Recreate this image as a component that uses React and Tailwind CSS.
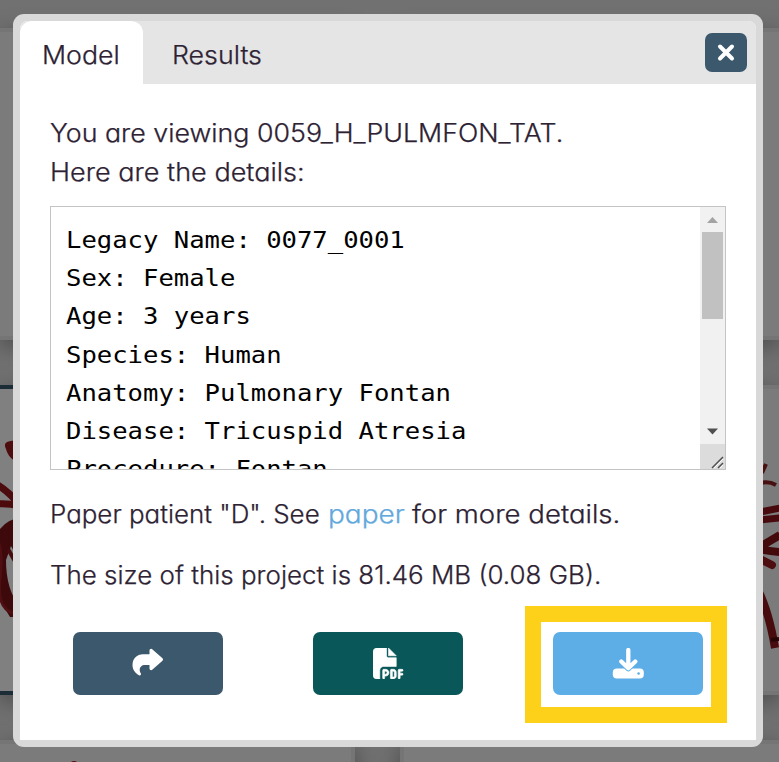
import { FaFilePdf } from "react-icons/fa6";

const details = [
  "Legacy Name: 0077_0001",
  "Sex: Female",
  "Age: 3 years",
  "Species: Human",
  "Anatomy: Pulmonary Fontan",
  "Disease: Tricuspid Atresia",
  "Procedure: Fontan",
];

function Backdrop() {
  return (
    <div className="absolute inset-0 grid grid-cols-[355px_1fr] grid-rows-[312px_310px_100px] gap-x-[45px] gap-y-[45px] overflow-hidden bg-[#717171] pt-7">
      <div className="border-4 border-l-0 border-[#757575] bg-[#7b7b7b] shadow-[0_6px_22px_rgba(0,0,0,0.35)]" />
      <div className="border-4 border-r-0 border-[#757575] bg-[#7b7b7b] shadow-[0_6px_22px_rgba(0,0,0,0.35)]" />
      <div className="border-y-4 border-[#1d2d38] bg-[#808080] shadow-[0_6px_22px_rgba(0,0,0,0.35)]">
        <svg className="h-[302px] w-10" viewBox="0 389 40 302" fill="none">
          <path d="M20 441C10 440 2 441 6 449C8 456 11 459 20 464Z" fill="#4d0c0e" />
          <path d="M-4 484Q7 490 20 505M-4 504Q8 503 20 506" stroke="#4c0b0d" strokeWidth="7" />
          <path d="M-4 535Q5 519 20 518V562L11 546L6 560Q6 590 20 607V617H10L-4 594Z" fill="#3d090b" />
          <path d="M-2 541Q3 552 0 580T13 613" stroke="#4f0e11" strokeWidth="3" />
          <path d="M8 549L20 570" stroke="#450b0d" strokeWidth="4" />
        </svg>
      </div>
      <div className="flex justify-end border-4 border-r-0 border-[#757575] bg-[#7b7b7b] shadow-[0_6px_22px_rgba(0,0,0,0.35)]">
        <svg className="h-[302px] w-10" viewBox="739 389 40 302" fill="none">
          <path d="M762 473L766 464M760 483Q769 481 776 485" stroke="#491012" strokeWidth="4" />
          <path d="M760 512L780 508M760 520L780 518" stroke="#480a0c" strokeWidth="7" />
          <path d="M758 548L780 535M758 549Q768 551 780 552" stroke="#430a0c" strokeWidth="8" />
          <path d="M760 559L772 565" stroke="#4e0d0f" strokeWidth="8" strokeLinecap="round" />
          <path d="M758 590Q769 612 775 648" stroke="#480c0e" strokeWidth="8" />
          <path d="M771 640L779 639" stroke="#250607" strokeWidth="4" />
        </svg>
      </div>
      <div className="border-4 border-l-0 border-[#757575] bg-[#7b7b7b] shadow-[0_6px_22px_rgba(0,0,0,0.35)]">
        <svg className="ml-[68px] mt-[16px] h-3 w-3" viewBox="0 0 12 12">
          <circle cx="6" cy="6" r="5" fill="#4d0c0e" />
        </svg>
      </div>
      <div className="border-4 border-r-0 border-[#757575] bg-[#7b7b7b] shadow-[0_6px_22px_rgba(0,0,0,0.35)]" />
    </div>
  );
}

function CloseIcon() {
  return (
    <svg className="h-5 w-5" viewBox="0 0 20 20" fill="none" stroke="white" strokeWidth="4" strokeLinecap="round">
      <path d="M4 3.500L16 15.500M16 3.500L4 15.500" />
    </svg>
  );
}

function ShareIcon() {
  return (
    <svg className="h-8 w-8" viewBox="0 0 32 32">
      <path
        d="M17.500 2.700C17.500 1 19.300.3 20.500 1.400L30.500 10.300Q31.700 11.500 30.500 12.700L20.500 21.600C19.300 22.700 17.500 22 17.500 20.400V17H13C9.700 17 7.700 19.100 7.700 21.800C7.700 23.500 8.400 24.600 8.800 25.300C9.500 26.600 8.400 28 7 27.300C3.600 25.400.5 22 .5 17C.5 10.700 5 6.300 11 6.300H17.500Z"
        fill="white"
      />
    </svg>
  );
}

function DownloadIcon() {
  return (
    <svg className="h-8 w-8" viewBox="0 0 32 32" fill="none" strokeLinecap="round" strokeLinejoin="round">
      <rect x="0.8" y="20.500" width="31" height="10" rx="4" fill="white" />
      <circle cx="26.600" cy="25.500" r="1.300" fill="#5dade7" />
      <path d="M9.300 13.500L16.300 20.500L23.300 13.500" stroke="#5dade7" strokeWidth="5.800" />
      <path d="M16.300 2V19.500M9.300 13.500L16.300 20.300L23.300 13.500" stroke="white" strokeWidth="4.300" />
    </svg>
  );
}

function Scrollbar() {
  return (
    <div className="flex w-[25px] flex-col items-center bg-[#f1f1f1]">
      <svg className="h-[25px] w-[25px]" viewBox="0 0 25 25">
        <path d="M7 16L12.500 10L18 16Z" fill="#a3a3a3" />
      </svg>
      <div className="mr-px h-[87px] w-[21px] bg-[#c1c1c1]" />
      <div className="flex-1" />
      <svg className="h-[25px] w-[25px]" viewBox="0 0 25 25">
        <path d="M7 9.500H18L12.500 15.500Z" fill="#505050" />
      </svg>
      <svg className="h-[25px] w-[25px] bg-[#dcdcdc]" viewBox="0 0 25 25" fill="none">
        <path d="M12 24L23 13M18 24L23 19" stroke="#505050" strokeWidth="1.500" />
        <path d="M14 24L23 15M20 24L23 21" stroke="white" strokeWidth="1" />
      </svg>
    </div>
  );
}

export default function App() {
  return (
    <div className="relative h-[762px] w-[779px] overflow-hidden font-['Inter',sans-serif] text-[25px] font-light text-[#2d2233] [-webkit-text-stroke:0.25px] [font-feature-settings:'cv11']">
      <Backdrop />
      <main className="relative ml-[13px] mt-[14px] h-[733px] w-[750px] rounded-[11px] bg-[#d9d9d9] p-[7px]">
        <div className="flex h-[719px] flex-col overflow-hidden rounded-t-[8px] bg-white">
          <header className="flex h-[63px] shrink-0 bg-[#e5e5e5] leading-[69px]">
            <div className="w-[123px] rounded-t-[12px] bg-white pl-[22px]">
              <span className="inline-block origin-left scale-x-[1.07] whitespace-nowrap">Model</span>
            </div>
            <div className="flex-1 pl-[29px]">
              <span className="inline-block origin-left scale-x-[1.07] whitespace-nowrap">Results</span>
            </div>
            <button className="mr-[9px] mt-3 flex h-[39px] w-[42px] items-center justify-center rounded-[7px] bg-[#3b586d]">
              <CloseIcon />
            </button>
          </header>
          <section className="flex flex-col px-[30px] pt-[30px]">
            <p className="h-[39px] origin-left scale-x-[1.071] whitespace-nowrap leading-[39px]">You are viewing 0059_H_PULMFON_TAT.</p>
            <p className="h-[39px] origin-left scale-x-[1.082] whitespace-nowrap leading-[39px]">Here are the details:</p>
            <div className="mt-[14px] flex h-[264px] w-[676px] border border-[#c4c4c4]">
              <div className="flex-1 overflow-hidden pl-[15px] pt-[14px]">
                <div className="w-[560px] origin-left scale-x-[1.112] whitespace-pre font-['DejaVu_Sans_Mono',monospace] text-[23px] font-normal leading-[38.2px] text-black [-webkit-text-stroke:0px]">
                  {details.map((line) => (
                    <div key={line}>{line}</div>
                  ))}
                </div>
              </div>
              <Scrollbar />
            </div>
            <p className="mt-[25px] flex h-[39px] whitespace-nowrap leading-[39px]">
              <span className="w-[278px] origin-left scale-x-[1.037]">Paper patient "D". See</span>
              <span className="w-[84px] origin-left scale-x-[1.12] text-[#62a8dc]">paper</span>
              <span className="origin-left scale-x-[1.102]">for more details.</span>
            </p>
            <p className="mt-[22px] h-[39px] origin-left scale-x-[1.038] whitespace-nowrap leading-[39px]">The size of this project is 81.46 MB (0.08 GB).</p>
          </section>
          <footer className="mt-[11px] flex h-[117px] items-start pl-[53px]">
            <button className="mt-[26px] flex h-[63px] w-[150px] items-center justify-center rounded-[7px] bg-[#3b586d]">
              <ShareIcon />
            </button>
            <button className="ml-[90px] mt-[26px] flex h-[63px] w-[150px] items-center justify-center rounded-[7px] bg-[#0a575a] text-white">
              <FaFilePdf className="h-[31px] w-[31px] stroke-white stroke-[10px]" />
            </button>
            <div className="ml-[62px] h-[117px] w-[202px] border-[16px] border-[#fdd119] pl-3 pt-[10px]">
              <button className="flex h-[63px] w-[150px] items-center justify-center rounded-[7px] bg-[#5dade7]">
                <DownloadIcon />
              </button>
            </div>
          </footer>
        </div>
      </main>
    </div>
  );
}
